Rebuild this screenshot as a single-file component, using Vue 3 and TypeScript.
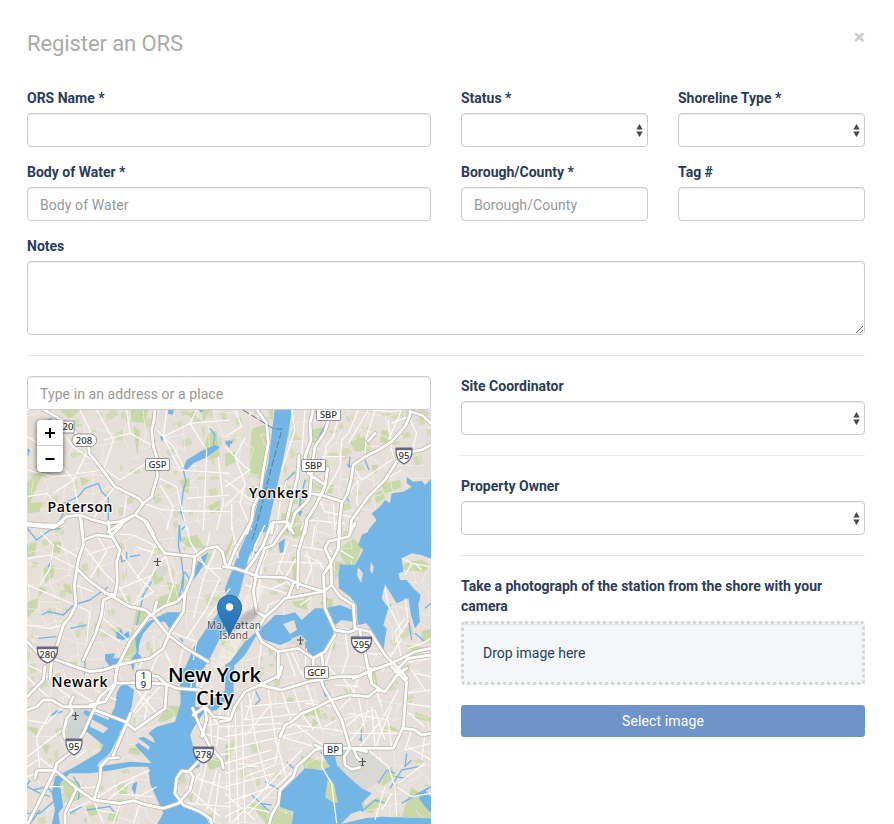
<script setup lang="ts">
import { reactive } from 'vue'

interface Tile {
  x: number
  y: number
  green: string
  water: string
  stream: string
  minor: string
  major: string
}

interface Badge {
  x: number
  y: number
  w: number
  text: string
}

const form = reactive({
  name: '',
  status: '',
  shoreline: '',
  body: '',
  county: '',
  tag: '',
  notes: '',
  address: '',
  coordinator: '',
  owner: '',
})

// Map sheets: each is drawn at three units to the pixel.
const tiles: Tile[] = [
  {
    x: 20, y: 370,
    green: 'M22 340L60 290L75 300L50 350L22 420ZM120 120L180 120L150 150ZM330 120L385 120L375 160L335 155ZM565 190L590 180L600 260L575 265L550 235ZM480 330L510 325L505 370L490 365ZM60 235L80 270L55 275ZM560 410L600 390L600 425L570 430ZM340 170L360 180L352 260L345 210ZM30 400L75 395L60 425L22 430ZM495 130L530 125L525 150ZM180 320L210 330L185 350ZM545 120L570 120L550 155Z',
    water: 'M490 295L500 270L550 240L585 225L600 232L560 262L520 280L500 300ZM615 218L630 210L630 235ZM445 118L462 118L458 134L444 132ZM22 235L30 240L24 262ZM420 198L432 200L426 216ZM536 120L552 118L543 128Z',
    stream: 'M115 460L130 430L120 405L175 380L195 355L235 340L245 365L265 385L265 440L262 480M485 480L498 465L482 425L490 360L498 335L490 300M570 175L585 195L580 225M75 155L95 145',
    minor: 'M22 200L90 240L160 330L180 435M100 150L160 230L300 330L410 260M180 120L210 180L205 240L160 330L100 370M230 120L280 210L250 300M320 120L330 190L405 230M22 300L100 320L250 300L285 350M410 320L470 350L500 480M440 120L430 200L480 300L630 310M630 150L510 160L430 200M530 120L510 160L560 240L550 480M410 180L460 230L490 290M285 350L245 400L220 450M370 400L430 420L630 425M320 370L310 455M22 380L80 370L120 410L180 435M250 210L330 190M595 260L610 400L590 480M420 345L460 410L440 480M500 385L630 375',
    major: 'M70 118L130 153L205 225L208 250L240 290L285 350L355 385M405 118L402 150L395 180L400 230L410 260L412 320L400 360L395 380L370 400L345 435L300 455L260 460L220 450L180 435L140 440L110 465L70 465L22 460M345 435L380 455L400 490M180 435L187 490M335 440L265 485M355 385L370 400',
  },
  {
    x: 225, y: 370,
    green: 'M80 175L120 165L125 220L105 330L70 300L75 250ZM470 180L495 185L490 220L465 215ZM300 345L328 345L320 370L302 370ZM470 340L525 330L530 350L480 375ZM130 120L150 120L145 165ZM170 430L215 425L210 465L170 460ZM445 375L470 360L480 385L455 400ZM100 420L140 400L135 440ZM0 250L30 245L35 275L0 290ZM375 215L420 200L425 240L390 245ZM440 285L460 285L455 310L440 305ZM205 380L240 375L235 405L200 400ZM260 180L295 170L280 220L255 215Z',
    water: 'M150 115L201 115L192 180L172 280L150 375L125 485L77 485L105 370L130 280L140 190ZM630 315L600 345L590 332L565 335L545 322L545 340L560 350L535 365L500 370L495 400L480 390L465 410L440 430L455 450L430 480L430 490L640 490L640 315ZM0 212L25 212L20 222L5 222ZM222 410L232 425L225 440L217 425ZM364 280L382 290L370 293Z',
    stream: 'M300 165L270 225L262 290M222 410L240 330M375 260L372 288M180 335L210 305M360 370L372 395M420 270L432 300',
    minor: 'M0 230L60 290L75 300L0 350M0 410L60 350M30 120L50 170L0 200M60 205L30 260L60 340L45 400L80 480M185 330L165 400L155 480M200 120L210 180L170 300M225 480L250 450L360 460M400 120L370 190L350 210L345 290L300 370M450 120L425 200L420 250M490 150L500 240L510 275M500 160L550 140L575 190L560 245M400 330L395 400L410 420M430 380L460 340L530 300M290 260L360 260M240 120L230 255M325 400L330 480M380 285L410 330L500 270M345 120L325 200L305 225L290 300M0 330L90 400M20 400L20 480M440 120L500 125L530 120M430 120L370 220M530 120L490 210M280 380L300 425L400 445M350 400L400 330',
    major: 'M95 118L125 160L130 220L115 300L105 370L85 410L80 450L65 490M265 118L255 160L258 210L240 260L250 310L300 345L290 375L350 395M310 150L300 185L270 230L260 300L255 370L290 375M308 295L300 350L270 410L245 450L240 490M255 375L250 390L210 430L195 480L185 455L145 457L140 490M222 255L218 320L200 390L185 455L205 490M555 118L555 135L540 170L500 215L460 240L420 260L385 285L378 330L368 370L350 400L340 490M555 125L590 135L618 160M618 225L590 240L560 245M515 275L480 330L430 380L380 450L375 490M430 213L450 190',
  },
  {
    x: 20, y: 525,
    green: 'M70 125L105 120L100 155L75 175ZM22 230L55 220L50 250L22 280ZM95 50L125 50L120 85L95 80ZM440 170L480 180L475 230L400 255L420 215L450 205ZM350 250L380 250L375 300L340 300L345 350L360 350L350 400L310 400L330 345ZM530 110L580 75L560 120L530 140ZM130 175L150 180L160 210L135 200ZM60 180L80 195L55 215ZM270 310L305 305L295 335ZM480 40L530 30L555 70L500 65ZM600 345L630 340L610 370ZM20 60L50 50L45 90L20 100ZM390 145L425 130L430 165L405 180Z',
    water: 'M630 185L615 215L590 270L560 310L520 370L495 430L495 455L535 455L570 400L600 340L640 300L640 185ZM540 100L565 80L555 110L535 145L520 165L528 125ZM440 262L480 262L478 285L460 315L448 310L435 290L400 290L370 325L358 355L355 385L365 395L345 410L340 440L330 410L350 380L345 340L385 290ZM288 322L305 312L310 330L325 318L330 335L310 345L290 340ZM255 388L285 385L280 400L300 400L300 420L270 425L255 405ZM82 125L98 95L95 115L85 130Z',
    stream: 'M22 10L50 45L90 15L120 10M478 0L475 60L484 100L490 150L484 190L470 240M478 0L482 50M492 140L488 200M300 65L305 110L320 105L320 80M360 90L330 95M65 270L85 260L130 270L160 240L210 225L265 185M55 340L110 335M150 310L200 300M350 300L370 210L395 170M265 0L275 25L300 65M195 450L195 395L230 320M250 425L245 450M495 140L510 165L500 190M480 340L490 350',
    minor: 'M22 100L90 90L170 130M22 180L70 200L165 240M190 60L250 140L300 190L330 245M230 30L260 80L210 160M300 80L350 150L400 200L330 245M270 25L340 30L400 60M340 240L410 125L440 90M410 50L380 120L350 160M22 300L90 310L130 300M260 205L250 280L330 350M235 310L300 350M165 240L210 260L200 350M435 85L460 180L440 240M60 20L100 60L90 130L60 180M445 330L400 420L390 450M490 365L470 450M450 320L530 350M525 95L600 160L560 250L500 340M590 65L550 160L520 280M570 20L560 70M500 0L510 50L560 130L610 130M630 190L560 280M110 60L180 100M200 90L290 60M300 190L400 150M405 85L350 65M165 180L220 200M530 350L520 405M430 370L460 430M370 400L350 450M22 420L90 450',
    major: 'M185 -10L190 60L175 105L170 135L163 180L168 240L150 275L130 300L115 350L95 400L90 460M190 45L230 30L270 35L300 5L310 -10M265 -10L270 25L300 75L290 110L292 170L285 210L250 225L245 270L225 330L190 405M170 130L205 165L260 205L330 245L375 255L400 275L445 330L490 365L565 410M375 -10L410 50L435 85L525 95L560 70L590 65L607 80L615 115L635 130M525 95L518 150L495 205L470 230L430 245L385 275L330 350L295 420L285 460M495 205L490 260L450 320L430 370L390 400L340 410L295 420L250 435L210 440L165 425L110 405L60 390L22 350M410 230L400 270M22 0L100 8L130 -10M255 205L285 210',
  },
  {
    x: 225, y: 525,
    green: 'M200 5L225 5L235 30L205 40ZM200 95L215 95L212 170L203 160ZM345 70L385 40L410 65L390 120L370 130L345 90ZM200 230L240 225L250 255L210 245ZM300 215L325 225L320 250L300 245ZM520 130L550 110L590 105L618 120L600 140L540 135ZM475 240L500 235L500 255L480 255ZM590 320L618 310L618 355L590 350ZM545 360L610 370L570 390ZM150 165L180 165L170 180ZM0 80L25 30L20 60L0 110ZM330 110L355 110L330 170ZM280 230L300 250L310 235ZM0 350L15 345L0 370Z',
    water: 'M77 0L112 0L95 50L70 100L45 200L20 270L0 300L0 190L35 100ZM450 -5L430 20L410 30L400 60L415 75L390 120L345 118L340 150L342 190L375 215L395 240L398 300L425 295L450 330L460 350L475 378L485 310L475 300L490 250L470 220L480 178L515 235L550 220L558 270L570 310L585 290L580 240L587 210L565 190L545 165L525 165L520 145L535 140L530 100L560 85L590 90L640 110L640 -5ZM130 290L150 270L180 270L210 262L230 285L270 250L300 250L345 240L395 260L385 290L350 285L330 300L320 350L290 390L265 400L240 370L240 345L225 330L190 350L165 360L120 345L95 330L60 390L30 420L15 410L60 350ZM0 420L30 400L25 455L0 455ZM160 55L180 40L175 80L165 85ZM100 65L135 68L100 85ZM180 0L190 0L190 25Z',
    stream: 'M75 70L100 90M550 280L560 345M600 250L618 235M570 325L600 350',
    minor: 'M20 0L40 100M120 0L90 60L75 130M150 20L110 120L95 250M190 50L150 160M230 70L180 160M160 110L290 115M240 90L280 110L300 140M240 180L260 130L245 80M225 240L255 220M140 190L190 170M110 300L130 240L180 220M60 180L100 190M270 0L260 70M200 60L320 80M160 130L205 195M100 180L185 205M480 190L490 240L530 320M540 220L550 290L510 350M530 400L510 320L540 280M560 115L618 125M530 100L560 115L540 150M550 410L618 400M330 330L300 430M360 320L370 390L350 450M400 340L420 385L500 390M470 440L530 340M590 380L618 390M110 350L100 430M200 380L230 450M245 370L240 430M345 75L385 100M570 115L590 135M550 370L590 355L618 340M180 370L210 450M280 390L330 450',
    major: 'M-5 125L30 130L60 140L100 155L180 158L230 180L295 200L320 180L345 215L385 240L390 310L435 320L480 390L530 440L545 460M390 315L370 322L330 315L300 250L298 200L295 150L320 110L340 70L345 -5M295 200L180 220L150 250L120 275L95 260L85 200L95 140L120 70L145 60L165 30L190 -5M10 125L30 75L75 -5M60 140L90 100L115 60L140 -5M120 275L95 320L110 350L160 380L220 370L265 400L300 380L330 330M405 320L420 385L435 460M385 460L430 440L500 415L570 380L618 370M320 180L318 110L300 70L310 50L370 35L390 -5M218 190L220 80L245 -5M160 380L160 460M265 400L265 440M190 215L205 175M510 440L550 400L618 390M290 390L295 430',
  },
  {
    x: 20, y: 670,
    green: 'M420 140L450 105L480 110L475 135L430 155L410 155ZM330 235L365 230L360 255L325 250ZM110 320L175 335L190 380L150 400L130 360ZM290 350L325 345L320 375L300 375ZM165 225L150 160L140 185L145 220ZM555 270L605 260L600 290L570 300ZM22 170L55 175L50 200ZM270 425L300 425L290 455L260 450ZM500 380L520 370L515 395ZM60 220L90 225L80 255ZM195 410L235 400L240 430L210 440ZM190 450L200 440L200 462Z',
    water: 'M300 50L315 40L342 60L335 110L325 135L300 190L270 250L240 275L230 290L330 275L395 280L345 225L355 218L385 240L390 230L355 205L370 200L405 220L400 205L385 190L410 170L465 155L482 100L480 -5L520 -5L530 50L525 110L560 115L580 85L618 60L640 30L640 70L590 120L550 130L520 175L510 195L525 250L540 290L490 310L465 330L460 370L480 400L550 430L570 465L410 465L430 430L390 340L385 290L330 290L280 300L210 310L150 310L120 340L125 380L130 410L115 430L120 465L95 465L105 420L95 370L105 320L165 290L240 245L250 225L200 185L185 180L215 150L210 170L250 190L265 175L210 145L190 130L195 120L265 150L285 110L290 70ZM90 138L110 120L130 125L105 135ZM340 340L352 335L345 375L335 355Z',
    stream: 'M22 350L60 370L90 380M22 430L60 430L100 395M30 462L60 420M110 380L80 350L40 360M200 420L270 410L290 435M22 345L30 330M160 320L180 350L175 390M150 430L185 410',
    minor: 'M22 20L60 60L90 85M60 0L120 60L155 85M22 150L80 160L130 110M60 300L50 200L90 130M22 260L100 200L140 170M130 10L160 60L225 100M200 0L190 60M225 60L290 90M200 240L160 270M300 190L380 60L400 15M320 150L410 30M345 130L420 50M370 170L385 80M390 130L360 90M410 130L350 60M220 390L300 340L390 300M245 280L230 420L290 430M340 390L410 350M280 370L400 380M250 400L340 330M170 355L240 350M130 430L220 390L250 460M300 405L280 460M360 400L340 460M520 320L630 360M500 350L600 440M540 310L480 390M560 280L530 400M590 300L560 420M630 250L560 260M555 110L600 170L630 170M550 170L630 150M550 190L620 210M570 130L575 230M600 120L590 230M520 20L510 60M540 0L530 50M560 0L540 60M600 310L580 460M22 320L50 310M22 290L60 265L105 300M500 400L630 410M240 0L260 40M80 350L130 350',
    major: 'M22 120L50 110L70 90L95 90L130 110L225 110L240 80L285 40L292 -10M160 80L150 100L157 125L140 145L130 190L135 205M210 105L255 95L285 45M225 110L190 190L155 245L110 280L105 300L22 465M225 120L315 155L345 180L435 115L438 75L440 45L415 20L385 15M285 40L345 38L440 42L470 55L540 60M105 300L50 302L45 325M105 300L170 355L220 390L300 400L340 392L380 405L430 415L475 400L510 360L520 320L510 305L485 303L470 325L465 370L490 405L540 425L570 445L580 475M222 390L240 330L242 290L265 265L295 263M332 130L280 255M505 305L560 250M518 115L540 170L570 230L605 270L610 295M520 135L555 110L560 150L545 200M170 355L135 430L135 475M22 80L70 30L75 -10M560 115L580 140L630 145',
  },
  {
    x: 225, y: 670,
    green: 'M0 225L15 220L20 260L0 275ZM95 400L150 430L165 410L195 410L205 470L130 470L75 400ZM225 255L275 270L330 280L320 295L240 300ZM310 320L325 330L340 400L320 395L300 380ZM350 360L380 380L370 390L345 385ZM250 120L295 120L280 135L235 140ZM570 125L618 145L618 155L570 145ZM560 350L618 400L618 445L530 440ZM185 80L205 85L205 100L185 100ZM490 165L520 180L515 190L490 180ZM60 285L85 285L85 295L65 295ZM435 0L450 0L460 55L445 45ZM460 330L500 290L510 320L470 350ZM400 420L460 380L470 400L440 430ZM265 145L280 160L260 175ZM355 55L380 60L370 80Z',
    water: 'M285 245L330 255L335 285L370 320L410 355L440 370L410 400L415 420L380 430L345 465L200 465L205 425L165 410L165 370L215 320L240 295L290 300L315 290ZM280 20L295 25L310 80L300 80ZM0 0L25 5L25 65L0 85ZM580 370L600 360L618 380L618 430L600 410L585 390ZM335 465L420 445L470 440L630 445L630 470L335 470ZM400 210L410 200L412 212Z',
    stream: 'M90 60L105 90L90 105M120 335L165 360M80 375L140 430M185 275L205 295M495 355L530 300L580 290M510 320L545 325M530 400L580 370L618 350M410 425L450 390L480 400M545 250L540 290L560 270M105 400L140 405M460 340L485 300L510 310M595 365L618 350M410 180L408 215',
    minor: 'M0 170L160 160L340 180M0 240L250 180M10 80L15 460M30 100L40 460M50 90L60 460M0 200L200 170M0 280L140 240M0 310L160 260M70 60L90 200L130 350M130 60L150 200L180 310M0 350L150 310M0 400L140 350M20 460L230 240M70 430L270 240M0 370L90 450M170 60L200 155L300 230M200 40L230 130L265 180M165 200L290 235M240 100L340 110M60 110L270 90M60 150L230 130M340 120L380 80L400 20M350 150L450 120L480 210M370 220L410 170L430 120M400 235L470 150L520 60M450 235L500 110M350 20L400 80L420 180M330 45L400 50M540 70L618 60M540 100L618 110M560 0L600 60M540 120L600 170M500 235L490 150L370 130M375 190L520 190M330 180L370 190M295 235L290 290L320 340L335 460M430 240L490 290L510 350L515 440M500 370L470 420M520 340L600 280M515 350L560 380L618 370M560 180L540 240L618 220M550 230L618 270M600 190L590 270M450 450L480 350M0 440L60 410L150 430M230 0L260 90L290 180M40 280L100 290M60 320L150 285M60 150L90 60M140 100L60 200M430 0L470 110M570 10L618 20M200 140L165 200L150 280M410 130L350 180M335 150L300 170M440 110L450 230',
    major: 'M-15 155L15 150L30 110L60 65L105 45L170 60L250 35L340 20L400 20L430 5L450 -5M105 45L165 15L170 -10M275 -10L295 50L318 90L350 150L375 235M318 90L375 75L430 80L455 60L480 65L520 10L500 -10M318 90L270 115L230 130L200 155L180 165L165 200M520 10L545 35L535 170L505 235L375 235L290 235L270 240L215 290L205 320L165 360L160 400L140 435L130 470M535 175L570 180L590 195L618 190M435 -5L440 40L470 62M520 10L545 -5M375 235L358 260L360 285L380 298L405 292M385 235L395 260L410 275M385 235L425 245M270 225L290 235',
  },
]

// Small repeatable pseudo-random sequence for side streets and pocket parks.
let seed = 7
const rnd = (): number => {
  seed = (seed * 16807) % 2147483647
  return seed / 2147483647
}

const step = 15
const nodes: number[][][] = []
for (let r = 0; r < 30; r++) {
  const row: number[][] = []
  for (let c = 0; c < 29; c++) {
    row.push([
      Math.round((20 + c * step + r * 1.4 - 14 + (rnd() - 0.5) * 13) * 10) / 10,
      Math.round((402 + r * step + (rnd() - 0.5) * 13) * 10) / 10,
    ])
  }
  nodes.push(row)
}
let streets = ''
for (let r = 0; r < 29; r++) {
  for (let c = 0; c < 28; c++) {
    const a = nodes[r][c]
    if (rnd() > 0.5) streets += `M${a}L${nodes[r][c + 1]}`
    if (rnd() > 0.45) streets += `M${a}L${nodes[r + 1][c]}`
  }
}

let parks = ''
for (let i = 0; i < 300; i++) {
  const x = 27 + rnd() * 404
  const y = 410 + Math.pow(rnd(), 1.6) * 414
  const w = 2 + rnd() * 7
  const h = 2 + rnd() * 7
  parks += `M${x.toFixed(1)} ${y.toFixed(1)}l${w.toFixed(1)} ${(-h / 3).toFixed(1)}l${(w / 4).toFixed(1)} ${h.toFixed(1)}l${(-w).toFixed(1)} ${(h / 3).toFixed(1)}z`
}

let blocks = ''
for (let i = 0; i < 12; i++) {
  blocks += `M${214 + i * 3} ${668 - i * 6.2}l12 5M${212 + i * 1.8} ${672 - i}l34 -76`
}

const badges: Badge[] = [
  { x: 316.5, y: 408.5, w: 24, text: 'SBP' },
  { x: 301.5, y: 459.5, w: 24, text: 'SBP' },
  { x: 145.5, y: 458.5, w: 24, text: 'GSP' },
  { x: 304.5, y: 666.5, w: 24, text: 'GCP' },
  { x: 323.5, y: 743.5, w: 19, text: 'BP' },
]

const shields = [
  { x: 404, y: 455, w: 16, text: '95' },
  { x: 47.5, y: 654, w: 20, text: '280' },
  { x: 361.5, y: 644, w: 20, text: '295' },
  { x: 74, y: 746, w: 16, text: '95' },
  { x: 203.5, y: 754, w: 20, text: '278' },
]

const airports = [
  [157.5, 562],
  [300.5, 640.5],
  [75.5, 716],
  [362.5, 762],
]
</script>

<template>
  <main class="modal">
    <header class="head">
      <h3>Register an ORS</h3>
      <button class="close" type="button" aria-label="Close">×</button>
    </header>

    <form @submit.prevent>
      <div class="grid">
        <label class="field"><span>ORS Name *</span><input v-model="form.name" type="text" /></label>
        <label class="field">
          <span>Status *</span>
          <div class="select">
            <select v-model="form.status"></select>
            <svg viewBox="0 0 7 13"><path d="M3.5 0L6.7 5.4H.3ZM3.5 13L.3 7.6H6.7Z" /></svg>
          </div>
        </label>
        <label class="field">
          <span>Shoreline Type *</span>
          <div class="select">
            <select v-model="form.shoreline"></select>
            <svg viewBox="0 0 7 13"><path d="M3.5 0L6.7 5.4H.3ZM3.5 13L.3 7.6H6.7Z" /></svg>
          </div>
        </label>
        <label class="field"><span>Body of Water *</span><input v-model="form.body" type="text" placeholder="Body of Water" /></label>
        <label class="field"><span>Borough/County *</span><input v-model="form.county" type="text" placeholder="Borough/County" /></label>
        <label class="field"><span>Tag #</span><input v-model="form.tag" type="text" /></label>
        <label class="field wide"><span>Notes</span><textarea v-model="form.notes"></textarea></label>
      </div>

      <hr />

      <div class="lower">
        <section class="place">
          <input v-model="form.address" type="text" placeholder="Type in an address or a place" />
          <div class="map">
            <svg class="canvas" viewBox="27 410 404 414" width="404" height="414">
              <rect x="27" y="410" width="404" height="414" fill="#e7dfd9" />
              <path :d="parks" fill="#d3dab8" />
              <g v-for="(t, i) in tiles" :key="'g' + i" :transform="`translate(${t.x} ${t.y}) scale(.33333)`">
                <path :d="t.green" class="green" />
              </g>
              <path :d="streets" class="street" />
              <path :d="blocks" class="street" />
              <path d="M335 750H365L387 767L382 780L365 790L348 777L335 765Z" fill="#d8d8d5" />
              <path d="M75 708L93 709L82 738L68 740L67 727Z" fill="#cfd3d2" />
              <path d="M155 568L168 565L167 574L158 579ZM290 636L307 632L309 644L298 648Z" fill="#d8d8d5" />
              <g v-for="(t, i) in tiles" :key="'w' + i" :transform="`translate(${t.x} ${t.y}) scale(.33333)`">
                <path :d="t.water" class="water" />
                <path :d="t.stream" class="stream" />
              </g>
              <path d="M283 624L294 620L297 630L290 634ZM358 567L363 573L361 583L357 575ZM371 562L374 568L372 574L370 570Z" fill="#e7dfd9" />
              <path d="M292 638L301 635L307 641L300 646L290 644Z" fill="#d8d8d5" />
              <path d="M328 777L334 784L338 803L332 802L325 797Z" fill="#c8d8a8" />
              <g v-for="(t, i) in tiles" :key="'n' + i" :transform="`translate(${t.x} ${t.y}) scale(.33333)`">
                <path :d="t.minor" class="minor" />
              </g>
              <g v-for="(t, i) in tiles" :key="'c' + i" :transform="`translate(${t.x} ${t.y}) scale(.33333)`">
                <path :d="t.major" class="casing" />
              </g>
              <g v-for="(t, i) in tiles" :key="'m' + i" :transform="`translate(${t.x} ${t.y}) scale(.33333)`">
                <path :d="t.major" class="major" />
              </g>
              <path class="boundary" d="M243 410L274 429H282L270 473L258 520L252 541" />

              <g v-for="(a, i) in airports" :key="'a' + i" :transform="`translate(${a[0]} ${a[1]})`">
                <path d="M0 -4V4M-3.5 -.5H3.5M-1.5 3.5H1.5" class="plane" />
              </g>

              <g class="badge">
                <path d="M63 421H74V433H63" />
                <text x="68" y="430.3">20</text>
                <rect x="72" y="434" width="24.5" height="12.5" rx="6" />
                <text x="84" y="443.6">208</text>
                <g v-for="(b, i) in badges" :key="'b' + i">
                  <rect :x="b.x" :y="b.y" :width="b.w" height="12" rx="1.5" />
                  <text :x="b.x + b.w / 2" :y="b.y + 9.5">{{ b.text }}</text>
                </g>
                <rect x="135.5" y="670" width="16" height="20" rx="4" />
                <text x="143.5" y="678.8">1</text>
                <text x="143.5" y="688">9</text>
              </g>
              <g v-for="(s, i) in shields" :key="'s' + i" :transform="`translate(${s.x} ${s.y})`" class="shield">
                <path :d="`M${-s.w / 2} -7H${s.w / 2}Q${s.w / 2 + 1} 5 0 9Q${-s.w / 2 - 1} 5 ${-s.w / 2} -7Z`" />
                <path :d="`M${-s.w / 2} -7H${s.w / 2}V-4.8H${-s.w / 2}Z`" class="cap" />
                <text y="4">{{ s.text }}</text>
              </g>

              <g class="town">
                <text x="47.500" y="511.5" textLength="65">Paterson</text>
                <text x="249" y="498" textLength="59">Yonkers</text>
                <text x="51.500" y="686.5" textLength="56">Newark</text>
              </g>
              <g class="city">
                <text x="168" y="682" textLength="93">New York</text>
                <text x="196" y="705" textLength="38">City</text>
              </g>
              <g class="island">
                <text x="207" y="629" textLength="54">Manhattan</text>
                <text x="219" y="639" textLength="29">Island</text>
              </g>

              <defs>
                <linearGradient id="pin" x1="0" y1="0" x2="0" y2="1">
                  <stop offset="0" stop-color="#3585c8" />
                  <stop offset="1" stop-color="#2670af" />
                </linearGradient>
                <filter id="soft" x="-20%" y="-20%" width="140%" height="140%">
                  <feGaussianBlur stdDeviation="1.8" />
                </filter>
              </defs>
              <path d="M230 634L240 617Q248 609 256 608Q262 612 254 619Z" fill="#000" opacity=".2" filter="url(#soft)" />
              <path d="M229.5 635.5C226 626 217.5 616 217.5 607.5C217.5 600.5 223 595.3 229.5 595.3S241.5 600.5 241.5 607.5C241.5 616 233 626 229.5 635.5Z" fill="url(#pin)" stroke="#2a6ca5" />
              <circle cx="229.5" cy="607" r="4.2" fill="#fff" stroke="#2c6fa8" stroke-width=".7" />
            </svg>
            <div class="zoom">
              <button type="button" aria-label="Zoom in"><svg viewBox="0 0 10 10"><path d="M0 5H10M5 0V10" /></svg></button>
              <button type="button" aria-label="Zoom out"><svg viewBox="0 0 10 10"><path d="M.5 5H9.5" /></svg></button>
            </div>
          </div>
        </section>

        <section class="side">
          <label class="field">
            <span>Site Coordinator</span>
            <div class="select">
              <select v-model="form.coordinator"></select>
              <svg viewBox="0 0 7 13"><path d="M3.5 0L6.7 5.4H.3ZM3.5 13L.3 7.6H6.7Z" /></svg>
            </div>
          </label>
          <hr />
          <label class="field">
            <span>Property Owner</span>
            <div class="select">
              <select v-model="form.owner"></select>
              <svg viewBox="0 0 7 13"><path d="M3.5 0L6.7 5.4H.3ZM3.5 13L.3 7.6H6.7Z" /></svg>
            </div>
          </label>
          <hr />
          <div class="field">
            <span>Take a photograph of the station from the shore with your camera</span>
            <div class="drop">Drop image here</div>
          </div>
          <button class="pick" type="button">Select image</button>
        </section>
      </div>
    </form>
  </main>
</template>

<style>
body {
  background: #fff;
  overflow: hidden;
}
</style>

<style scoped>
.modal,
.modal * {
  box-sizing: border-box;
}
.modal {
  width: 894px;
  height: 824px;
  overflow: hidden;
  padding: 27px 29px 0 27px;
  font: 14px/20px Roboto, "Liberation Sans", sans-serif;
  color: #2a3c5a;
}
.head {
  display: flex;
  justify-content: space-between;
  height: 61px;
}
h3 {
  margin: 0;
  padding-top: 3px;
  font-size: 22px;
  line-height: 28px;
  font-weight: 400;
  letter-spacing: -0.1px;
  color: #aaa;
}
.close {
  height: 21px;
  padding: 0;
  border: 0;
  background: none;
  font: 700 21px/21px Roboto, sans-serif;
  color: #ccc;
}
.grid {
  display: grid;
  grid-template-columns: 404px 187px 187px;
  gap: 15px 30px;
}
.wide {
  grid-column: 1 / -1;
}
.field {
  display: flex;
  flex-direction: column;
  gap: 5px;
}
.field > span {
  font-weight: 700;
}
input,
select,
textarea {
  display: block;
  width: 100%;
  height: 34px;
  margin: 0;
  padding: 7px 12px 5px;
  border: 1px solid #ccc;
  border-radius: 4px;
  background: #fff;
  box-shadow: inset 0 1px 1px rgba(0, 0, 0, 0.075);
  font: inherit;
  letter-spacing: 0.08px;
  color: #555;
  appearance: none;
}
textarea {
  height: 74px;
}
input::placeholder {
  color: #999;
}
.select {
  position: relative;
}
.select svg {
  position: absolute;
  right: 5px;
  top: 11px;
  width: 7px;
  height: 13px;
  fill: #4a4a4a;
}
hr {
  height: 1px;
  margin: 20px 0;
  border: 0;
  background: #eaeaea;
}
.lower {
  display: grid;
  grid-template-columns: 404px 404px;
  gap: 30px;
}
.map {
  position: relative;
  height: 414px;
}
.canvas {
  display: block;
}
.green {
  fill: #c8d8a8;
}
.water {
  fill: #73b6e6;
}
.stream {
  fill: none;
  stroke: #73b6e6;
  stroke-width: 4;
  stroke-linejoin: round;
}
.street {
  fill: none;
  stroke: #fbf8f4;
  stroke-width: 0.7;
  opacity: 0.75;
}
.minor {
  fill: none;
  stroke: #fdfcfa;
  stroke-width: 3.6;
  stroke-linejoin: round;
}
.casing,
.major {
  fill: none;
  stroke-linejoin: round;
  stroke-linecap: round;
}
.casing {
  stroke: #b9b6ae;
  stroke-width: 13;
}
.major {
  stroke: #fdfdfb;
  stroke-width: 8.5;
}
.boundary {
  fill: none;
  stroke: #5c7c94;
  stroke-width: 1;
  stroke-dasharray: 7 2.5;
}
.plane {
  fill: none;
  stroke: #555;
  stroke-width: 1.2;
}
.badge rect,
.badge path {
  fill: #fff;
  stroke: #888;
  stroke-width: 0.9;
}
.badge text,
.shield text {
  font: 500 9.5px "Noto Sans", "Open Sans", sans-serif;
  letter-spacing: 0;
  text-anchor: middle;
  fill: #333;
}
.shield path {
  fill: #fff;
  stroke: #66667e;
  stroke-width: 1.2;
}
.shield .cap {
  fill: #66667e;
  stroke: none;
}
.town text,
.city text {
  font: 600 14px "Open Sans", "Noto Sans", sans-serif;
  fill: #000;
  stroke: rgba(255, 255, 255, 0.8);
  stroke-width: 2.5px;
  stroke-linejoin: round;
  paint-order: stroke;
}
.city text {
  font-size: 20px;
}
.island text {
  font: 10px "Noto Sans", "Open Sans", sans-serif;
  fill: #4c4c4c;
  stroke: rgba(255, 255, 255, 0.6);
  stroke-width: 1.5px;
  paint-order: stroke;
}
.zoom {
  position: absolute;
  left: 10px;
  top: 10px;
  width: 26px;
  border-radius: 4px;
  background: #fff;
  box-shadow: 0 1px 5px rgba(0, 0, 0, 0.65);
}
.zoom button {
  display: flex;
  align-items: center;
  justify-content: center;
  width: 26px;
  height: 26px;
  padding: 0;
  border: 0;
  background: none;
}
.zoom button:first-child {
  border-bottom: 1px solid #ccc;
}
.zoom svg {
  width: 10px;
  height: 10px;
  stroke: #000;
  stroke-width: 2;
}
.drop {
  height: 64px;
  padding: 19px;
  border: 3px dotted #d3d5d5;
  border-radius: 4px;
  background: #f3f7f8;
  box-shadow: inset 0 1px 1px rgba(0, 0, 0, 0.075);
}
.pick {
  display: block;
  width: 100%;
  height: 32px;
  margin-top: 20px;
  border: 0;
  border-radius: 3px;
  background: #7094c9;
  font: inherit;
  letter-spacing: 0.12px;
  color: #fff;
}
</style>
